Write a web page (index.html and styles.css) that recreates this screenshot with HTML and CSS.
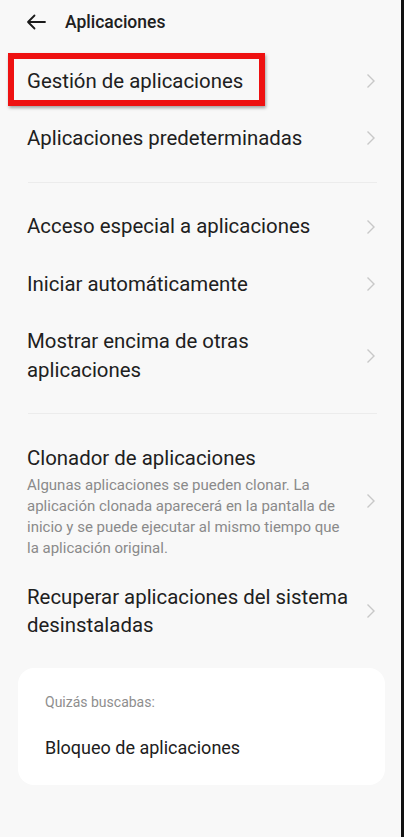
FILE: index.html
```html
<!DOCTYPE html>
<html lang="es">
<head>
    <meta charset="UTF-8">
    <meta name="viewport" content="width=device-width, initial-scale=1.0">
    <title>Aplicaciones</title>
    <link rel="stylesheet" href="styles.css">
</head>
<body>
<div class="screen">

    <div class="topbar">
        <svg class="back" width="20" height="16" viewBox="0 0 20 16">
            <path d="M19 8H2M8.5 1.5L2 8l6.5 6.5" fill="none" stroke="#1a1a1a" stroke-width="1.8" stroke-linecap="round" stroke-linejoin="round"/>
        </svg>
        <span class="topbar-title">Aplicaciones</span>
    </div>

    <div class="group">
        <div class="row highlighted">
            <div class="row-text"><div class="row-title">Gestión de aplicaciones</div></div>
            <svg class="chev" width="10" height="16" viewBox="0 0 10 16"><path d="M1.5 1.5L8 8l-6.5 6.5" fill="none" stroke="#c8c8c8" stroke-width="1.4"/></svg>
            <span class="marker"></span>
        </div>
        <div class="row">
            <div class="row-text"><div class="row-title">Aplicaciones predeterminadas</div></div>
            <svg class="chev" width="10" height="16" viewBox="0 0 10 16"><path d="M1.5 1.5L8 8l-6.5 6.5" fill="none" stroke="#c8c8c8" stroke-width="1.4"/></svg>
        </div>
    </div>

    <div class="divider"></div>

    <div class="group">
        <div class="row">
            <div class="row-text"><div class="row-title">Acceso especial a aplicaciones</div></div>
            <svg class="chev" width="10" height="16" viewBox="0 0 10 16"><path d="M1.5 1.5L8 8l-6.5 6.5" fill="none" stroke="#c8c8c8" stroke-width="1.4"/></svg>
        </div>
        <div class="row">
            <div class="row-text"><div class="row-title">Iniciar automáticamente</div></div>
            <svg class="chev" width="10" height="16" viewBox="0 0 10 16"><path d="M1.5 1.5L8 8l-6.5 6.5" fill="none" stroke="#c8c8c8" stroke-width="1.4"/></svg>
        </div>
        <div class="row">
            <div class="row-text"><div class="row-title">Mostrar encima de otras aplicaciones</div></div>
            <svg class="chev" width="10" height="16" viewBox="0 0 10 16"><path d="M1.5 1.5L8 8l-6.5 6.5" fill="none" stroke="#c8c8c8" stroke-width="1.4"/></svg>
        </div>
    </div>

    <div class="divider"></div>

    <div class="group">
        <div class="row with-sub">
            <div class="row-text">
                <div class="row-title">Clonador de aplicaciones</div>
                <div class="row-sub">Algunas aplicaciones se pueden clonar. La aplicación clonada aparecerá en la pantalla de inicio y se puede ejecutar al mismo tiempo que la aplicación original.</div>
            </div>
            <svg class="chev" width="10" height="16" viewBox="0 0 10 16"><path d="M1.5 1.5L8 8l-6.5 6.5" fill="none" stroke="#c8c8c8" stroke-width="1.4"/></svg>
        </div>
        <div class="row">
            <div class="row-text"><div class="row-title">Recuperar aplicaciones del sistema desinstaladas</div></div>
            <svg class="chev" width="10" height="16" viewBox="0 0 10 16"><path d="M1.5 1.5L8 8l-6.5 6.5" fill="none" stroke="#c8c8c8" stroke-width="1.4"/></svg>
        </div>
    </div>

    <div class="suggest">
        <div class="suggest-label">Quizás buscabas:</div>
        <div class="suggest-item">Bloqueo de aplicaciones</div>
    </div>

</div>
</body>
</html>
```

FILE: styles.css
```css
body {
    margin: 0;
    background-color: #f8f8f8;
    font-family: Roboto, "Noto Sans", "Liberation Sans", sans-serif;
    color: #202020;
}

.screen {
    min-height: 837px;
    box-sizing: border-box;
    border-right: 3px solid #111;
    padding-bottom: 20px;
}

.topbar {
    display: flex;
    align-items: center;
    padding: 10px 0 18px 26px;
    height: 24px;
}

.back {
    margin-right: 19px;
}

.topbar-title {
    font-size: 17.5px;
    font-weight: 500;
    line-height: 24px;
}

.row {
    position: relative;
    display: flex;
    align-items: center;
    padding: 14.5px 25px 14.5px 27px;
}

.row-text {
    flex: 1;
    margin-right: 10px;
}

.row-title {
    font-size: 20.4px;
    line-height: 28.4px;
}

.with-sub {
    padding-bottom: 10px;
}

.row-sub {
    margin-top: 3px;
    padding-right: 8px;
    font-size: 15px;
    line-height: 20.8px;
    color: #8a8a8a;
}

.chev {
    flex-shrink: 0;
}

/* red annotation box round the first entry */
.marker {
    position: absolute;
    left: 8px;
    top: 1px;
    width: 257px;
    height: 53px;
    box-sizing: border-box;
    border: 6px solid #ee1111;
    box-shadow: 1px 2px 3px rgba(0, 0, 0, 0.35);
}

.divider {
    height: 1px;
    background-color: #ececec;
    margin: 15px 24px 15px 28px;
}

.suggest {
    margin: 14px 16px 0 18px;
    padding: 23.7px 27px 24.8px;
    background-color: #fff;
    border-radius: 16px;
}

.suggest-label {
    font-size: 14px;
    line-height: 20px;
    color: #8e8e8e;
}

.suggest-item {
    margin-top: 22.5px;
    font-size: 18px;
    line-height: 26px;
}
```
